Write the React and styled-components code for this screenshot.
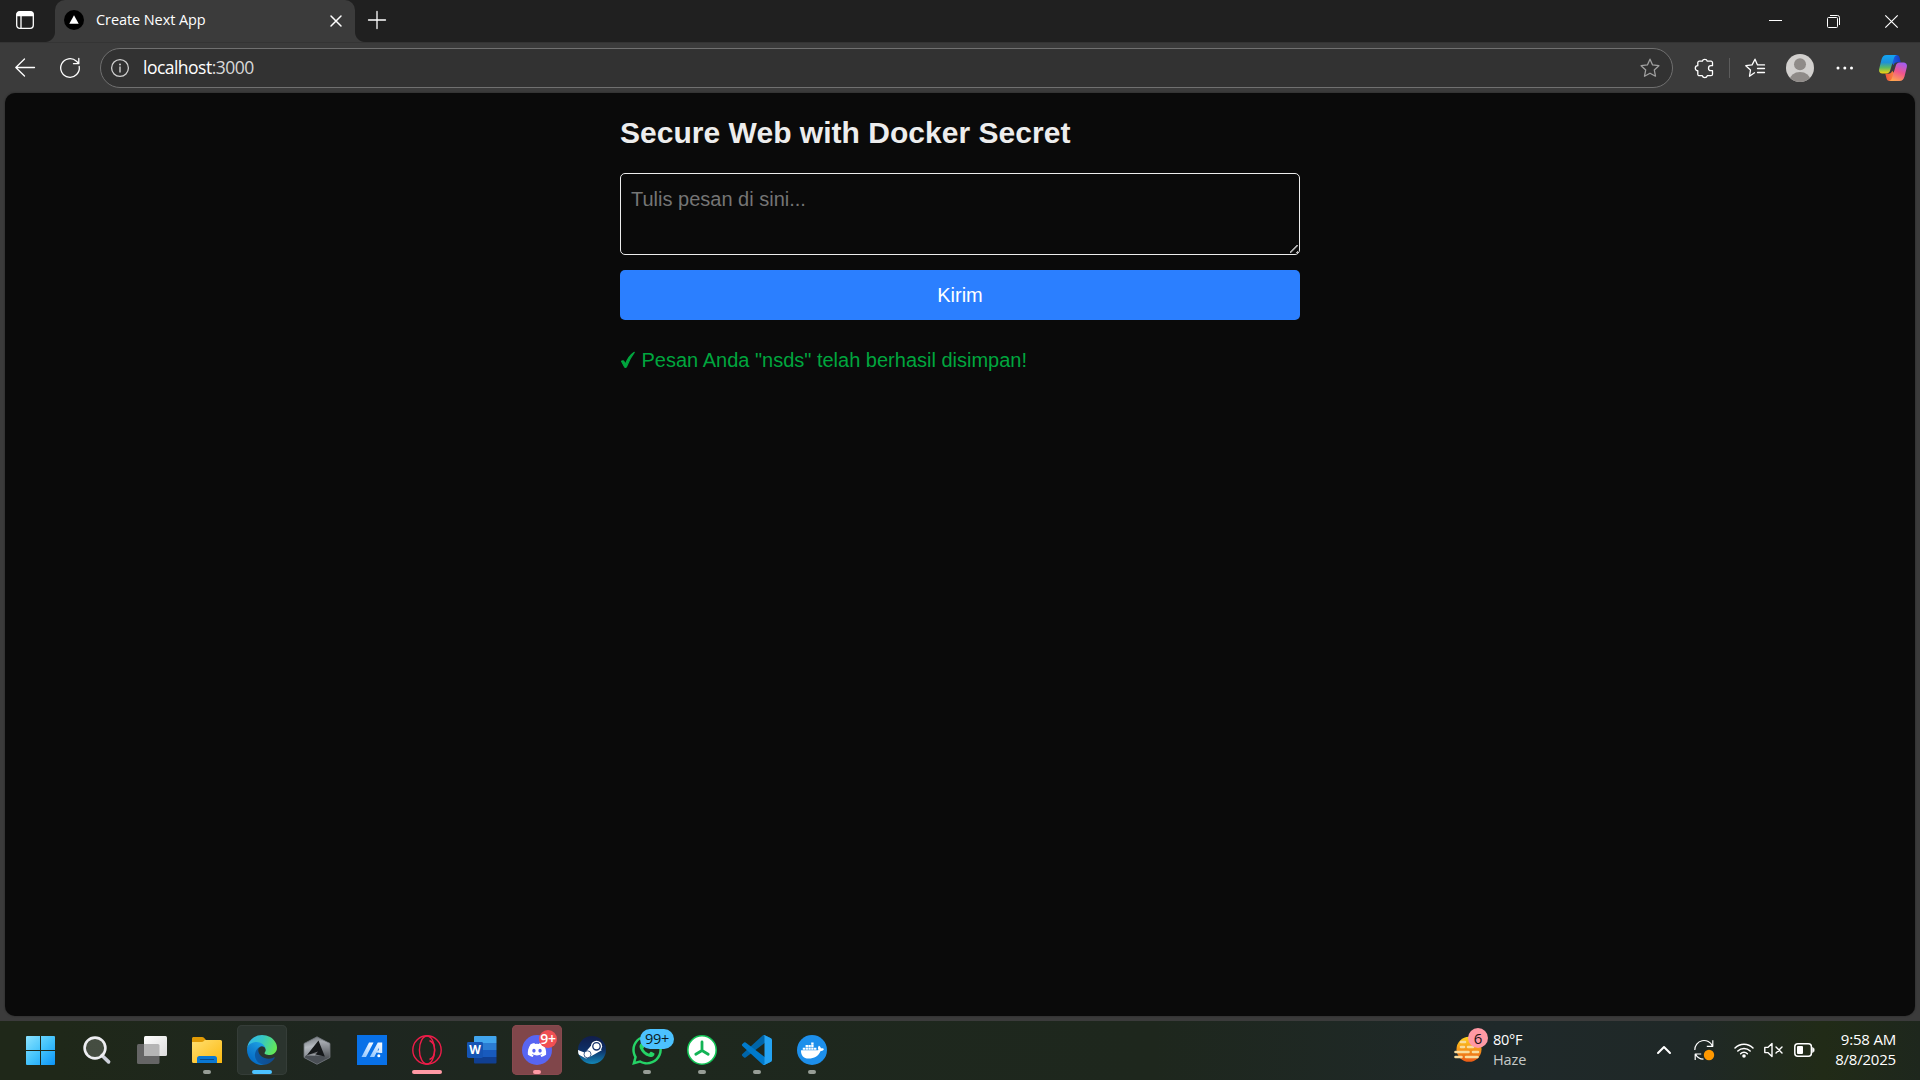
import React from "react";
import styled, { createGlobalStyle, css } from "styled-components";
import { FaDiscord, FaDocker, FaWhatsapp } from "react-icons/fa";

const GlobalStyle = createGlobalStyle`
  *, *::before, *::after { box-sizing: border-box; }
  html, body { margin: 0; padding: 0; background: #0a0a0a; overflow: hidden; }
  svg { display: block; flex: none; overflow: visible; }
`;

const ui = css`
  font-family: "Segoe UI", "Open Sans", "Noto Sans", sans-serif;
`;

const Screen = styled.div`
  display: flex;
  flex-direction: column;
  width: 1920px;
  height: 1080px;
  overflow: hidden;
`;

const Browser = styled.div`
  display: flex;
  flex-direction: column;
  height: 1021px;
  background: #3b3b3b;
`;

const Label = styled.span`
  ${ui}
  font-size: ${(p) => p.$size || 15}px;
  letter-spacing: ${(p) => p.$track || 0}px;
  color: ${(p) => p.$color || "#ffffff"};
  line-height: 20px;
  white-space: nowrap;
`;

/* ---------- tab strip ---------- */

const TabStrip = styled.header`
  display: flex;
  align-items: stretch;
  height: 42px;
  background: #202020;
`;

const TabActions = styled.div`
  display: flex;
  width: 55px;
  padding: 11px 0 0 16px;
`;

const Tab = styled.div`
  position: relative;
  display: flex;
  align-items: flex-start;
  width: 300px;
  padding: 10px 13px 0 9px;
  background: #3b3b3b;
  border-radius: 10px 10px 0 0;
  &::before, &::after {
    content: "";
    position: absolute;
    bottom: 0;
    width: 10px;
    height: 10px;
  }
  &::before { left: -10px; background: radial-gradient(circle at 0 0, #202020 9.5px, #3b3b3b 10.5px); }
  &::after { right: -10px; background: radial-gradient(circle at 100% 0, #202020 9.5px, #3b3b3b 10.5px); }
`;

const TabTitle = styled(Label)`
  flex: 1;
  margin-left: 12px;
`;

const TabClose = styled.div`
  padding-top: 5px;
`;

const NewTab = styled.div`
  flex: 1;
  padding: 11px 0 0 13px;
`;

const WindowButtons = styled.div`
  display: flex;
  gap: 45px;
  padding: 15px 22px 0 0;
`;

/* ---------- toolbar ---------- */

const Toolbar = styled.div`
  display: flex;
  align-items: center;
  height: 51px;
  padding: 0 13px 1px 15px;
  border-top: 1px solid #343434;
`;

const NavButtons = styled.div`
  display: flex;
  gap: 25px;
  width: 85px;
`;

const AddressBar = styled.div`
  display: flex;
  align-items: center;
  width: 1573px;
  height: 40px;
  padding: 0 12px 0 9px;
  border: 1px solid #707070;
  border-radius: 20px;
  background: #323232;
`;

const Url = styled(Label)`
  flex: 1;
  margin: -2px 0 0 13px;
`;

const ToolbarActions = styled.div`
  display: flex;
  flex: 1;
  align-items: center;
  padding-left: 21px;
`;

const Gap = styled.span`
  width: ${(p) => p.$w}px;
`;

const Divider = styled.span`
  width: 1px;
  height: 20px;
  margin: 0 15px;
  background: #5c5c5c;
`;

/* ---------- page ---------- */

const Page = styled.main`
  flex: 1;
  margin: 0 5px 5px;
  border-radius: 10px;
  background: #0a0a0a;
  box-shadow: 0 0 2px #222;
  font-family: Arial, "Liberation Sans", sans-serif;
  color: #ededed;
`;

const Container = styled.div`
  display: flex;
  flex-direction: column;
  width: 720px;
  margin: 0 auto;
  padding: 20px;
`;

const Title = styled.h1`
  margin: 0 0 20px;
  font-size: 30px;
  line-height: 40px;
  font-weight: 700;
  letter-spacing: 0.03px;
`;

const Form = styled.form`
  display: flex;
  flex-direction: column;
  gap: 15px;
`;

const Message = styled.textarea`
  height: 82px;
  padding: 10px;
  border: 1px solid #ededed;
  border-radius: 5px;
  background: transparent;
  color: inherit;
  font: inherit;
  font-size: 20px;
  line-height: 30px;
  resize: vertical;
  outline: none;
  &::placeholder { color: #757575; }
  &::-webkit-resizer {
    background: linear-gradient(135deg, transparent 42%, #b4b4b4 44% 55%, transparent 57% 84%, #b4b4b4 86% 94%, transparent 96%) 6px 6px / 8px 8px no-repeat;
  }
`;

const Submit = styled.button`
  height: 50px;
  border: 0;
  border-radius: 5px;
  background: #2b7fff;
  color: #ffffff;
  font: inherit;
  font-size: 20px;
  line-height: 30px;
`;

const Status = styled.p`
  display: flex;
  align-items: center;
  gap: 5.5px;
  margin: 25px 0 0;
  font-size: 20px;
  line-height: 30px;
  color: #00a63e;
`;

/* ---------- taskbar ---------- */

const Taskbar = styled.footer`
  display: flex;
  height: 59px;
  padding: 4px 25px 0 17px;
  background: linear-gradient(90deg, #1f2819 0%, #1f2819 3%, #1e2620 18%, #1e281e 32%, #1e271d 60%, #1f292a 78%, #1f2827 88%, #212b17 95%, #1e271d 100%);
`;

const Apps = styled.div`
  display: flex;
  flex: 1;
  gap: 5px;
`;

const Tile = styled.div`
  position: relative;
  display: flex;
  align-items: center;
  justify-content: center;
  width: 50px;
  height: 50px;
  border-radius: 5px;
  background: ${(p) => p.$bg || "transparent"};
  box-shadow: ${(p) => (p.$edge ? `inset 0 0 0 1px ${p.$edge}` : "none")};
`;

const Indicator = styled.span`
  position: absolute;
  bottom: 1px;
  left: 50%;
  width: ${(p) => p.$w}px;
  height: 4px;
  transform: translateX(-50%);
  border-radius: 2px;
  background: ${(p) => p.$color};
`;

const Badge = styled.span`
  ${ui}
  position: absolute;
  top: ${(p) => p.$top}px;
  left: ${(p) => p.$left}px;
  width: ${(p) => p.$w}px;
  height: ${(p) => p.$h}px;
  border-radius: 10px;
  background: ${(p) => p.$bg};
  color: ${(p) => p.$color};
  font-size: ${(p) => p.$size}px;
  font-weight: ${(p) => p.$weight || 400};
  letter-spacing: -0.3px;
  line-height: ${(p) => p.$h}px;
  text-align: center;
`;

const DiscordDisc = styled.span`
  display: flex;
  align-items: center;
  justify-content: center;
  width: 30px;
  height: 30px;
  border-radius: 50%;
  background: #5865f2;
  color: #ffffff;
`;

const DockerDisc = styled(DiscordDisc)`
  background: #1d8feb;
`;

const Weather = styled.div`
  position: relative;
  display: flex;
  gap: 12px;
  width: 203px;
  padding-top: 5px;
`;

const Lines = styled.div`
  display: flex;
  flex-direction: column;
  align-items: ${(p) => (p.$end ? "flex-end" : "flex-start")};
`;

const Tray = styled.div`
  display: flex;
  align-items: flex-start;
  width: 238px;
  padding-top: 5px;
`;

const TrayIcon = styled.div`
  display: flex;
  align-items: center;
  height: 40px;
  margin-right: ${(p) => p.$gap || 0}px;
`;

const Clock = styled(Lines)`
  flex: 1;
  margin: -1px -1px 0 0;
`;

const stroke = { fill: "none", stroke: "#fff", strokeWidth: 1.3, strokeLinecap: "round", strokeLinejoin: "round" };
const starPath = "M10 1.2l2.6 5.7 6.3.8-4.6 4.3 1.2 6.2-5.5-3-5.5 3 1.2-6.2L1.1 7.7l6.3-.8z";

function TabActionsIcon() {
  return (
    <svg width="18" height="18" viewBox="0 0 18 18">
      <rect x=".7" y=".7" width="16.6" height="16.6" rx="3" {...stroke} />
      <path d="M.5 5.2V3.5a3 3 0 0 1 3-3h11a3 3 0 0 1 3 3v1.7z" fill="#fff" />
      <path d="M5 5v12" {...stroke} />
    </svg>
  );
}

function Favicon() {
  return (
    <svg width="20" height="20" viewBox="0 0 20 20">
      <circle cx="10" cy="10" r="10" fill="#000" />
      <path d="M10 5.200l4.700 8.600H5.300z" fill="#fff" />
    </svg>
  );
}

function ProfileIcon() {
  return (
    <svg width="28" height="28" viewBox="0 0 28 28">
      <clipPath id="avatar"><circle cx="14" cy="14" r="14" /></clipPath>
      <g clipPath="url(#avatar)">
        <rect width="28" height="28" fill="#d2d0ce" />
        <circle cx="14" cy="10.3" r="6" fill="#8f8b88" />
        <ellipse cx="14" cy="26.5" rx="10.5" ry="8.5" fill="#8f8b88" />
      </g>
    </svg>
  );
}

function CopilotIcon() {
  return (
    <svg width="28" height="26" viewBox="0 0 28 26">
      <defs>
        <linearGradient id="cpL" x1=".4" y1="0" x2=".4" y2="1">
          <stop offset="0" stopColor="#12a5f4" /><stop offset=".4" stopColor="#1e90d8" />
          <stop offset=".68" stopColor="#5cba62" /><stop offset="1" stopColor="#fbd20c" />
        </linearGradient>
        <linearGradient id="cpR" x1=".7" y1="0" x2=".3" y2="1">
          <stop offset="0" stopColor="#a35cf0" /><stop offset=".5" stopColor="#f0558c" />
          <stop offset="1" stopColor="#ffa64e" />
        </linearGradient>
        <linearGradient id="cpT"><stop offset="0" stopColor="#1c62e2" /><stop offset="1" stopColor="#1739c4" /></linearGradient>
        <linearGradient id="cpB"><stop offset="0" stopColor="#f0503c" /><stop offset="1" stopColor="#f7863c" /></linearGradient>
      </defs>
      <path d="M13 0h4.400c2 0 2.800 1.200 3.300 3l1 4.200h-3c-2.600 0-3.600 1.200-4.200 3L13 8z" fill="url(#cpT)" />
      <path d="M15 26h-4.300c-2 0-2.800-1.200-3.300-3l-1.100-4.200H9c2.600 0 3.600-1.200 4.200-3L15 18z" fill="url(#cpB)" />
      <path d="M7.600 0H18c-1.800.3-2.700 1.800-3.300 3.900l-3.400 11.200C10.700 17.300 9.600 18.600 7.300 18.600H4.200C1 18.600-.5 16.800.2 13.700L2.500 4.500C3.200 1.800 4.600 0 7.600 0z" fill="url(#cpL)" />
      <path d="M20.400 26H10c1.800-.3 2.700-1.800 3.300-3.900l3.400-11.200C17.300 8.700 18.400 7.400 20.700 7.400h3.100c3.200 0 4.700 1.800 4 4.900l-2.300 9.200c-.7 2.700-2.100 4.500-5.100 4.500z" fill="url(#cpR)" />
    </svg>
  );
}

function StartIcon() {
  return (
    <svg width="30" height="30" viewBox="0 0 30 30">
      <linearGradient id="win" gradientUnits="userSpaceOnUse" x1="0" y1="0" x2="29" y2="30">
        <stop offset="0" stopColor="#8be3ff" /><stop offset=".5" stopColor="#43c3fc" /><stop offset="1" stopColor="#0a93f8" />
      </linearGradient>
      <g transform="translate(-1 1)" fill="url(#win)">
        <path d="M1 0h13v14H0V1a1 1 0 0 1 1-1zM15 0h13a1 1 0 0 1 1 1v13H15zM0 15h14v14H1a1 1 0 0 1-1-1zM15 15h14v13a1 1 0 0 1-1 1H15z" />
      </g>
    </svg>
  );
}

function SearchIcon() {
  return (
    <svg width="30" height="30" viewBox="0 0 30 30">
      <path d="M20 20.500l6.600 6.400" stroke="#cdd0da" strokeWidth="3.600" strokeLinecap="round" />
      <circle cx="13" cy="13" r="10.400" fill="#ffffff2c" stroke="#eeeef2" strokeWidth="2.600" />
    </svg>
  );
}

function TaskViewIcon() {
  return (
    <svg width="30" height="30" viewBox="0 0 30 30">
      <linearGradient id="tv" x2="1" y2="1"><stop stopColor="#fff" /><stop offset="1" stopColor="#dcdcdc" /></linearGradient>
      <rect x="0" y="9" width="22.500" height="20" rx="1.500" fill="#656565" />
      <rect x="7" y="1" width="23" height="20" rx="1.500" fill="url(#tv)" />
      <path d="M7 9h14a1.500 1.500 0 0 1 1.500 1.500V21H8.500A1.500 1.500 0 0 1 7 19.500z" fill="#b5b5b5" />
    </svg>
  );
}

function ExplorerIcon() {
  return (
    <svg width="30" height="30" viewBox="0 0 30 30">
      <linearGradient id="fld" x2="1" y2="1"><stop stopColor="#ffdf70" /><stop offset="1" stopColor="#fcb90f" /></linearGradient>
      <path d="M0 3.500C0 2.700.7 2 1.500 2H10c1 0 1.600.4 2.200 1l2 2.200H13v4H0z" fill="#e09a05" />
      <path d="M0 7h9.500c1 0 1.700-.3 2.300-.9l1-1.100H28.500A1.500 1.500 0 0 1 30 6.500V28H1.500A1.500 1.500 0 0 1 0 26.500z" fill="url(#fld)" />
      <path d="M5 28v-4.500A2.500 2.500 0 0 1 7.500 21h15a2.500 2.500 0 0 1 2.500 2.500V28z" fill="#0a78d2" />
      <path d="M8.500 24.500h13" stroke="#0a4a87" strokeWidth="1.200" strokeLinecap="round" />
    </svg>
  );
}

function EdgeIcon() {
  return (
    <svg width="30" height="30" viewBox="0 0 256 256">
      <defs>
        <linearGradient id="e1" x1=".1" y1=".7" x2="1" y2=".7"><stop stopColor="#0c59a4" /><stop offset="1" stopColor="#114a8b" /></linearGradient>
        <linearGradient id="e2" x1=".8" y1=".2" x2=".3" y2="1"><stop stopColor="#1b9de2" /><stop offset=".4" stopColor="#1384d2" /><stop offset="1" stopColor="#0067c4" /></linearGradient>
        <linearGradient id="e3" x1="0" y1=".3" x2="1" y2=".6"><stop stopColor="#32b7ec" /><stop offset=".45" stopColor="#36c7c3" /><stop offset="1" stopColor="#65ea53" /></linearGradient>
      </defs>
      <g transform="translate(-4.630 -4.920)">
        <path fill="url(#e1)" d="M235.680 195.460a93.730 93.730 0 0 1-10.540 4.710 101.870 101.870 0 0 1-35.900 6.460c-47.320 0-88.540-32.550-88.540-74.320A31.480 31.480 0 0 1 117.130 105c-42.800 1.800-53.800 46.400-53.800 72.530 0 73.880 68.090 81.370 82.760 81.370 7.910 0 19.840-2.300 27-4.560l1.310-.44a128.340 128.340 0 0 0 66.600-52.800 4 4 0 0 0-5.320-5.640z" />
        <path fill="url(#e2)" d="M110.340 246.340A79.200 79.200 0 0 1 87.600 225a80.720 80.720 0 0 1 29.530-120c3.120-1.470 8.450-4.130 15.540-4a32.350 32.350 0 0 1 25.690 13 31.880 31.880 0 0 1 6.360 18.660c0-.21 24.460-79.600-80-79.600-43.900 0-80 41.660-80 78.210a130.150 130.150 0 0 0 12.110 56 128 128 0 0 0 156.380 67.110 75.550 75.550 0 0 1-62.780-8z" />
      </g>
      <path fill="url(#e3)" d="M152.310 148.860c-.81 1.050-3.300 2.500-3.300 5.660 0 2.610 1.700 5.120 4.720 7.230 14.380 10 41.490 8.680 41.560 8.680a59.560 59.560 0 0 0 30.270-8.350A61.380 61.380 0 0 0 256 109.200c.26-22.410-8-37.310-11.340-43.910C223.490 23.840 177.720 0 128 0A128 128 0 0 0 0 126.200c.48-36.540 36.800-66.050 80-66.050 3.500 0 23.460.34 42 10.070 16.340 8.580 24.900 18.940 30.850 29.210 6.180 10.670 7.280 24.150 7.280 29.520s-2.740 13.330-7.820 19.910z" />
    </svg>
  );
}

function CursorIcon() {
  return (
    <svg width="30" height="30" viewBox="0 0 30 30">
      <defs>
        <linearGradient id="cu" x1=".2" y1="0" x2=".4" y2="1"><stop stopColor="#70757b" /><stop offset=".35" stopColor="#b4b9bf" /><stop offset="1" stopColor="#60656b" /></linearGradient>
        <linearGradient id="cu2" x1="0" y1="0" x2="0" y2="1"><stop stopColor="#a9adb3" /><stop offset="1" stopColor="#45494e" /></linearGradient>
      </defs>
      <path d="M15 1.800L28 8.500v14L15 29.300 2 22.500v-14z" fill="url(#cu)" />
      <path d="M17 6L28 8v14.500L22.500 25z" fill="url(#cu2)" />
      <path d="M2 22.500L15 29.300l7.500-4V21L4.500 20z" fill="#4a4f55" />
      <path d="M16.500 5.500L22.800 21.500 12.500 19.300l-7.500.7z" fill="#15181a" />
      <path d="M4.500 20.500L16 16.500l-3.200 4z" fill="#c3c7cc" opacity=".55" />
      <path d="M15 1.800L28 8.500v14L15 29.300 2 22.500v-14z" fill="none" stroke="#6f747a" strokeWidth=".8" />
    </svg>
  );
}

function MyAsusIcon() {
  return (
    <svg width="30" height="30" viewBox="0 0 30 30">
      <linearGradient id="asus" x1="1" y1="0" x2="0" y2="1"><stop stopColor="#fff" /><stop offset="1" stopColor="#8cc4ff" /></linearGradient>
      <rect width="30" height="30" fill="#0871e8" />
      <g fill="url(#asus)">
        <path d="M12 7.500h4.500L9 22H4.500z" />
        <path d="M20.800 7.500h4.400V18h-3.400V12.800L17.300 22h-4.500z" />
        <path d="M19.500 15.500h3.500v2.300h-4.700z" />
      </g>
      <circle cx="21.800" cy="20.800" r="1.500" fill="#fff" />
    </svg>
  );
}

function OperaIcon() {
  return (
    <svg width="30" height="30" viewBox="0 0 30 30" fill="none" stroke="#ee1c49" strokeWidth="1.400">
      <circle cx="15" cy="15" r="14.200" />
      <ellipse cx="15" cy="15" rx="7.600" ry="14" />
      <path d="M17.500 5.500c3.200 1.500 5.200 5.200 5.200 9.500s-2 8-5.200 9.500" />
    </svg>
  );
}

function WordIcon() {
  return (
    <svg width="30" height="30" viewBox="0 0 30 30">
      <path d="M8 1h20.500A1 1 0 0 1 29.500 2v6H7V2a1 1 0 0 1 1-1z" fill="#41a5ee" />
      <path d="M7 8h22.500v7H7z" fill="#2b7cd3" />
      <path d="M7 15h22.500v7H7z" fill="#185abd" />
      <path d="M7 22h22.500v5.500a1 1 0 0 1-1 1H8a1 1 0 0 1-1-1z" fill="#103f91" />
      <rect x="0" y="7" width="16" height="16" rx="1.400" fill="#1554b4" />
      <text x="8" y="19" fontFamily="Open Sans, sans-serif" fontSize="12" fontWeight="700" fill="#fff" textAnchor="middle">W</text>
    </svg>
  );
}

function SteamIcon() {
  return (
    <svg width="30" height="30" viewBox="0 0 30 30">
      <linearGradient id="st" x2="0" y2="1"><stop stopColor="#111d4a" /><stop offset=".5" stopColor="#0e2f66" /><stop offset="1" stopColor="#1387b8" /></linearGradient>
      <clipPath id="stc"><circle cx="15" cy="15" r="14" /></clipPath>
      <circle cx="15" cy="15" r="14" fill="url(#st)" />
      <g clipPath="url(#stc)">
        <path d="M0 14.500l8 3.300 6-7L25 15l-10.500 6L9 23.500 0 18.800z" fill="#fff" />
      </g>
      <circle cx="10.500" cy="19.300" r="3.500" fill="#fff" stroke="#123a72" strokeWidth=".8" />
      <circle cx="19.500" cy="11.300" r="5.600" fill="#fff" />
      <circle cx="19.500" cy="11.300" r="3.700" fill="#fff" stroke="#15306a" strokeWidth="1.300" />
    </svg>
  );
}

function TriodeIcon() {
  return (
    <svg width="30" height="30" viewBox="0 0 30 30">
      <circle cx="15" cy="15" r="14.200" fill="#fff" stroke="#12c355" strokeWidth="1.600" />
      <path d="M15 7v8.500M15 15.500l-6.200 3.800M15 15.500l6.200 3.800" stroke="#12b355" strokeWidth="2.800" strokeLinecap="round" />
    </svg>
  );
}

function VsCodeIcon() {
  return (
    <svg width="30" height="30" viewBox="0 0 100 100">
      <path fill="#0065a9" d="M96.500 10.600L75.900.8a6.200 6.200 0 0 0-7.100 1.200L1.300 63.600a4.200 4.200 0 0 0 0 6.200l5.500 5a4.200 4.200 0 0 0 5.300.2l81.200-61.600c2.700-2.100 6.600-.1 6.600 3.300v-.2a6.200 6.200 0 0 0-3.400-5.900z" />
      <path fill="#007acc" d="M96.500 89.400l-20.600 9.800a6.200 6.200 0 0 1-7.100-1.200L1.300 36.400a4.200 4.200 0 0 1 0-6.200l5.500-5a4.200 4.200 0 0 1 5.300-.2l81.200 61.600c2.700 2.100 6.600.1 6.600-3.300v.2a6.200 6.200 0 0 1-3.400 5.900z" />
      <path fill="#24a3f3" d="M75.900 99.200a6.200 6.200 0 0 1-7.100-1.200c2.300 2.300 6.200.7 6.200-2.600V4.600c0-3.300-3.900-4.900-6.200-2.600a6.200 6.200 0 0 1 7.100-1.200l20.600 9.900a6.200 6.200 0 0 1 3.500 5.600v67.400a6.200 6.200 0 0 1-3.500 5.600z" />
    </svg>
  );
}

function WeatherIcon() {
  return (
    <svg width="27" height="40" viewBox="0 0 27 40">
      <linearGradient id="sun" x2="0" y2="1"><stop stopColor="#ffd31f" /><stop offset="1" stopColor="#ea5a16" /></linearGradient>
      <circle cx="15" cy="19.300" r="12.500" fill="url(#sun)" />
      <path d="M7 12h4M1.500 22h13M19 22h5M1.500 27h6M12 27h11.500M7 17h3M14 17h5" stroke="#f9dc9b" strokeWidth="2.600" strokeLinecap="round" />
    </svg>
  );
}

function SyncIcon() {
  return (
    <svg width="20" height="20" viewBox="0 0 20 20">
      <g {...stroke} strokeWidth="1.200" strokeLinecap="butt">
        <path d="M.8 10A9.200 9.200 0 0 1 18.500 6.200M18.800.3v6h-6M9.500 19.200A9 9 0 0 1 1.500 14M1.200 20v-6h6" />
      </g>
      <circle cx="15" cy="15" r="5.200" fill="#ff9800" />
    </svg>
  );
}

function WifiIcon() {
  return (
    <svg width="20" height="16" viewBox="0 0 20 16">
      <g {...stroke} strokeWidth="1.500">
        <path d="M1 6a12.700 12.700 0 0 1 18 0M3.800 9a8.800 8.800 0 0 1 12.400 0M6.600 11.700a4.800 4.800 0 0 1 6.800 0" />
      </g>
      <circle cx="10" cy="14" r="1.800" fill="#fff" />
    </svg>
  );
}

function MuteIcon() {
  return (
    <svg width="19" height="16" viewBox="0 0 19 16">
      <path d="M.8 5.400h3L8 1.500v13l-4.200-3.900h-3zM12 5l6 6M18 5l-6 6" {...stroke} strokeWidth="1.400" />
    </svg>
  );
}

function BatteryIcon() {
  return (
    <svg width="21" height="14" viewBox="0 0 21 14">
      <rect x=".8" y=".8" width="16.600" height="12.400" rx="3" {...stroke} strokeWidth="1.500" />
      <rect x="3" y="3" width="6" height="8" rx="1" fill="#fff" />
      <path d="M18.500 4.500c1.200.3 1.700 1.200 1.700 2.500s-.5 2.200-1.700 2.500z" fill="#fff" stroke="#fff" strokeWidth=".6" />
    </svg>
  );
}

const idle = { $w: 8, $color: "#979d96" };

const apps = [
  { name: "start", icon: <StartIcon /> },
  { name: "search", icon: <SearchIcon /> },
  { name: "taskview", icon: <TaskViewIcon /> },
  { name: "explorer", icon: <ExplorerIcon />, mark: idle },
  { name: "edge", icon: <EdgeIcon />, bg: "#2b342e", edge: "#353d38", mark: { $w: 20, $color: "#4cc2ff" } },
  { name: "cursor", icon: <CursorIcon /> },
  { name: "myasus", icon: <MyAsusIcon /> },
  { name: "opera", icon: <OperaIcon />, mark: { $w: 30, $color: "#ff99a4" } },
  { name: "word", icon: <WordIcon /> },
  {
    name: "discord",
    icon: <DiscordDisc><FaDiscord size={20} /></DiscordDisc>,
    bg: "#80464a",
    edge: "#87494e",
    mark: { $w: 8, $color: "#ff99a4" },
    badge: { text: "9+", $top: 5, $left: 27, $w: 18, $h: 18, $bg: "#f04f53", $color: "#fff", $size: 14, $weight: 600 },
  },
  { name: "steam", icon: <SteamIcon /> },
  {
    name: "whatsapp",
    icon: <FaWhatsapp size={34} color="#25d366" />,
    mark: idle,
    badge: { text: "99+", $top: 4, $left: 18, $w: 34, $h: 20, $bg: "#4cc2ff", $color: "#0b1a22", $size: 14.5 },
  },
  { name: "triode", icon: <TriodeIcon />, mark: idle },
  { name: "vscode", icon: <VsCodeIcon />, mark: idle },
  { name: "docker", icon: <DockerDisc><FaDocker size={23} /></DockerDisc>, mark: idle },
];

function AppTile({ icon, bg, edge, mark, badge }) {
  return (
    <Tile $bg={bg} $edge={edge}>
      {icon}
      {badge && <Badge {...badge}>{badge.text}</Badge>}
      {mark && <Indicator {...mark} />}
    </Tile>
  );
}

function Tabs() {
  return (
    <TabStrip>
      <TabActions><TabActionsIcon /></TabActions>
      <Tab>
        <Favicon />
        <TabTitle $size={14.5} $track={-0.08}>Create Next App</TabTitle>
        <TabClose>
          <svg width="12" height="12" viewBox="0 0 12 12"><path d="M1 1l10 10M11 1L1 11" {...stroke} strokeWidth="1.500" /></svg>
        </TabClose>
      </Tab>
      <NewTab>
        <svg width="18" height="18" viewBox="0 0 18 18"><path d="M9 .5v17M.5 9h17" {...stroke} /></svg>
      </NewTab>
      <WindowButtons>
        <svg width="13" height="13" viewBox="0 0 13 13"><path d="M0 5.500h13" stroke="#fff" /></svg>
        <svg width="13" height="13" viewBox="0 0 13 13" fill="none" stroke="#fff">
          <rect x=".5" y="2.500" width="10" height="10" rx="1" />
          <path d="M3 .5h7.500a2 2 0 0 1 2 2V10" />
        </svg>
        <svg width="13" height="13" viewBox="0 0 13 13"><path d="M.3.3l12.400 12.400M12.700.3L.3 12.700" stroke="#fff" strokeWidth="1.200" /></svg>
      </WindowButtons>
    </TabStrip>
  );
}

function Navigation() {
  return (
    <Toolbar>
      <NavButtons>
        <svg width="20" height="20" viewBox="0 0 20 20"><path d="M19.500 9.500H.8M9.500 1L.8 9.500 9.500 18" {...stroke} /></svg>
        <svg width="20" height="20" viewBox="0 0 20 20"><path d="M19.200 8.500A9.300 9.300 0 1 1 16.500 3.300L18.800 5.500M18.800.5v5.200h-5.300" {...stroke} /></svg>
      </NavButtons>
      <AddressBar>
        <svg width="20" height="20" viewBox="0 0 20 20">
          <circle cx="10" cy="10" r="8.400" fill="none" stroke="#d0d0d0" strokeWidth="1.300" />
          <path d="M10 9v5" stroke="#d0d0d0" strokeWidth="1.400" strokeLinecap="round" />
          <circle cx="10" cy="6.400" r="1" fill="#d0d0d0" />
        </svg>
        <Url $size={17.5} $track={-0.52}>
          localhost<Label as="span" $size={17.5} $track={-0.52} $color="#d8d8d8">:3000</Label>
        </Url>
        <svg width="20" height="20" viewBox="0 0 20 20"><path d={starPath} {...stroke} stroke="#a0a0a0" /></svg>
      </AddressBar>
      <ToolbarActions>
        <svg width="20" height="20" viewBox="0 0 20 20">
          <path d="M5.300 3.200h3a2.600 2.600 0 0 1 5 0h3.700a1.500 1.500 0 0 1 1.500 1.500v3H17a2.300 2.300 0 0 0 0 5h1.500v3.500a1.500 1.500 0 0 1-1.500 1.500h-3.700a2.600 2.600 0 0 1-5 0h-3a1.500 1.500 0 0 1-1.500-1.500v-3.500a2.500 2.500 0 0 1 0-5v-3a1.500 1.500 0 0 1 1.500-1.500z" {...stroke} />
        </svg>
        <Divider />
        <svg width="20" height="20" viewBox="0 0 20 20">
          <path d="M9.500 14.800l-5 3.400 1-6.200L.8 7.700l6.300-.8L10 1.200l2.500 5.700h7M12.500 10.500h7M12.500 14.500h7" {...stroke} />
        </svg>
        <Gap $w={21} />
        <ProfileIcon />
        <Gap $w={22} />
        <svg width="18" height="4" viewBox="0 0 18 4" fill="#fff"><circle cx="2" cy="2" r="1.500" /><circle cx="8.800" cy="2" r="1.500" /><circle cx="15.500" cy="2" r="1.500" /></svg>
        <Gap $w={25} />
        <CopilotIcon />
      </ToolbarActions>
    </Toolbar>
  );
}

export default function App() {
  return (
    <Screen>
      <GlobalStyle />
      <Browser>
        <Tabs />
        <Navigation />
        <Page>
          <Container>
            <Title>Secure Web with Docker Secret</Title>
            <Form onSubmit={(e) => e.preventDefault()}>
              <Message rows={2} placeholder="Tulis pesan di sini..." />
              <Submit type="submit">Kirim</Submit>
            </Form>
            <Status>
              <svg width="16" height="18" viewBox="0 0 16 18"><path d="M1.500 10.200c1.200-.9 2.200-.6 2.800.8l1 2.200C7.500 8 10 4 14.300 1.300 11 5.500 8.500 10.500 6.500 15.800c-.7.800-1.600.8-2 0z" fill="#00a63e" stroke="#00a63e" strokeWidth="1.100" strokeLinejoin="round" /></svg>
              <span>Pesan Anda "nsds" telah berhasil disimpan!</span>
            </Status>
          </Container>
        </Page>
      </Browser>
      <Taskbar>
        <Apps>{apps.map((app) => <AppTile key={app.name} {...app} />)}</Apps>
        <Weather>
          <WeatherIcon />
          <Badge $top={3} $left={14} $w={20} $h={20} $bg="#ff99a4" $color="#1b1113" $size={15}>6</Badge>
          <Lines>
            <Label $size={14.5} $track={-0.25}>80°F</Label>
            <Label $size={14.5} $track={-0.1} $color="#c6cac8">Haze</Label>
          </Lines>
        </Weather>
        <Tray>
          <TrayIcon $gap={23}>
            <svg width="14" height="8" viewBox="0 0 14 8"><path d="M1 7l6-6 6 6" {...stroke} strokeWidth="2" /></svg>
          </TrayIcon>
          <TrayIcon $gap={20}><SyncIcon /></TrayIcon>
          <TrayIcon $gap={10}><WifiIcon /></TrayIcon>
          <TrayIcon $gap={11}><MuteIcon /></TrayIcon>
          <TrayIcon><BatteryIcon /></TrayIcon>
          <Clock $end>
            <Label $size={15} $track={-0.2}>9:58 AM</Label>
            <Label $size={15} $track={-0.2}>8/8/2025</Label>
          </Clock>
        </Tray>
      </Taskbar>
    </Screen>
  );
}
